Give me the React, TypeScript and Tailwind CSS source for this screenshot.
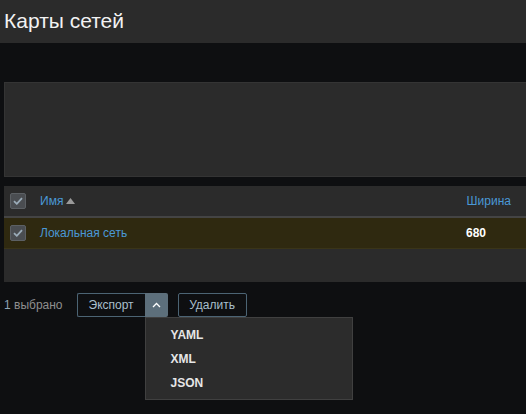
import React from 'react';

const CheckBox = () => (
  <div className="w-4 h-4 rounded-[2px] bg-[#4a4d51] border border-[#5c6064] flex items-center justify-center">
    <svg width="10" height="8" viewBox="0 0 10 8" fill="none">
      <path d="M1 4.2 L3.8 6.8 L9 1.2" stroke="#9aabb8" strokeWidth="1.8" />
    </svg>
  </div>
);

export default function App() {
  return (
    <div className="min-h-[414px] w-[526px] bg-[#0e0f11] text-[12px] overflow-hidden" style={{ fontFamily: '"Liberation Sans", Arial, sans-serif' }}>
      {/* header */}
      <div className="h-[43px] bg-[#2b2b2b] flex items-center px-1">
        <h1 className="text-[21px] text-[#f2f2f2] leading-none -mt-[2px]">Карты сетей</h1>
      </div>

      <div className="pl-1">
        {/* filter panel */}
        <div className="mt-[39px] h-[95px] bg-[#2b2b2b] border-l border-t border-b border-[#343434]" />

        {/* table */}
        <div className="mt-[9px] bg-[#2b2b2b]">
          <div className="h-[30px] flex items-center pl-[6px] pr-[15px]">
            <CheckBox />
            <div className="ml-[14px] flex items-center text-[#4a98d6]">
              Имя
              <svg width="9" height="6" viewBox="0 0 9 6" className="ml-[3px]">
                <path d="M0 6 L4.5 0 L9 6 Z" fill="#9a9a9a" />
              </svg>
            </div>
            <div className="ml-auto text-[#4a98d6]">Ширина</div>
          </div>
          <div className="h-[2px] bg-[#444444]" />
          <div className="h-[31px] flex items-center pl-[6px] pr-[15px] bg-[#2f2910] border-b border-[#3a3418]">
            <CheckBox />
            <div className="ml-[14px] text-[#4a98d6]">Локальная сеть</div>
            <div className="ml-auto w-[45px] text-white font-bold">680</div>
          </div>
          <div className="h-[33px]" />
        </div>

        {/* actions */}
        <div className="mt-[11px] flex items-center">
          <span className="text-[#8e8e8e]"><span className="text-[#8fa4b6]">1</span> выбрано</span>
          <div className="relative ml-[14px] flex h-[24px]">
            <button className="h-full px-[10px] border border-[#4c6474] border-r-0 rounded-l-[2px] text-[#a9bfcc] w-[68px]">Экспорт</button>
            <button className="h-full w-[23px] bg-[#5d6f7b] rounded-r-[2px] flex items-center justify-center">
              <svg width="9" height="6" viewBox="0 0 9 6" fill="none">
                <path d="M1 5 L4.5 1.5 L8 5" stroke="#ffffff" strokeWidth="1.3" />
              </svg>
            </button>
            <div className="absolute left-[68px] top-[24px] w-[208px] h-[83px] bg-[#2c2c2c] border border-[#404040] z-10 flex flex-col pl-[25px] pt-[9px] gap-[8px] text-[#e6e6e6] font-bold">
              <div className="h-[16px] flex items-center">YAML</div>
              <div className="h-[16px] flex items-center">XML</div>
              <div className="h-[16px] flex items-center">JSON</div>
            </div>
          </div>
          <button className="ml-[10px] h-[24px] w-[69px] border border-[#4c6474] rounded-[2px] text-[#a9bfcc]">Удалить</button>
        </div>
      </div>
    </div>
  );
}
